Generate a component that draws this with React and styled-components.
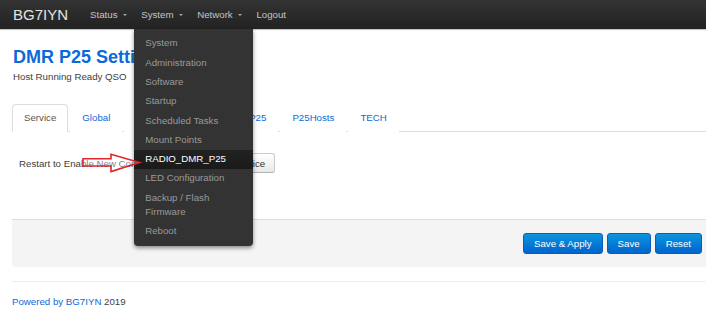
import styled, { createGlobalStyle } from "styled-components";

const GlobalStyle = createGlobalStyle`
  html, body {
    margin: 0;
    padding: 0;
    background: #fff;
    overflow: hidden;
  }
  body {
    font-family: "Liberation Sans", Arial, sans-serif;
    font-size: 9.7px;
    color: #404040;
  }
`;

const systemMenu = [
  "System",
  "Administration",
  "Software",
  "Startup",
  "Scheduled Tasks",
  "Mount Points",
  "RADIO_DMR_P25",
  "LED Configuration",
  "Backup / Flash Firmware",
  "Reboot",
];

const tabs = ["Service", "Global", "DMR", "DMRGW", "P25", "P25Hosts", "TECH"];

const App = () => {
  return (
    <>
      <GlobalStyle />
      <NavBar>
        <Brand>BG7IYN</Brand>
        <NavItem>
          Status <Caret />
        </NavItem>
        <NavItem>
          System <Caret />
          <DropMenu>
            {systemMenu.map((item) => (
              <MenuItem key={item} $active={item === "RADIO_DMR_P25"}>
                {item}
              </MenuItem>
            ))}
          </DropMenu>
        </NavItem>
        <NavItem>
          Network <Caret />
        </NavItem>
        <NavItem>Logout</NavItem>
      </NavBar>

      <Main>
        <Title>DMR P25 Settings</Title>
        <SubTitle>Host Running Ready QSO</SubTitle>

        <TabList>
          {tabs.map((t, i) => (
            <Tab key={t} $active={i === 0}>
              {t}
            </Tab>
          ))}
        </TabList>

        <FieldRow>
          <FieldLabel>Restart to Enable New Config</FieldLabel>
          <PlainButton>Restart Service</PlainButton>
          <Arrow width="60" height="20" viewBox="0 0 60 20">
            <path
              d="M1 5.8 L29 5.8 L29 1.3 L57.5 9.5 L29 18.6 L29 13 L1 13 Z"
              fill="rgba(255,255,255,0.35)"
              stroke="#e3252b"
              strokeWidth="1.6"
              strokeLinejoin="miter"
            />
          </Arrow>
        </FieldRow>

        <ActionPanel>
          <PrimaryButton>Save &amp; Apply</PrimaryButton>
          <PrimaryButton>Save</PrimaryButton>
          <PrimaryButton>Reset</PrimaryButton>
        </ActionPanel>

        <Footer>
          <FooterLink>Powered by BG7IYN</FooterLink> 2019
        </Footer>
      </Main>
    </>
  );
};
export default App;

const NavBar = styled.div`
  height: 29px;
  background: linear-gradient(to bottom, #333333, #222222);
  box-shadow: 0 1px 1px rgba(0, 0, 0, 0.22);
  display: flex;
  flex-direction: row;
  align-items: center;
  padding-left: 13px;
  position: relative;
  z-index: 2;
`;
const Brand = styled.span`
  font-size: 15px;
  color: #e4e4e4;
  margin-right: 15px;
`;
const NavItem = styled.div`
  position: relative;
  height: 29px;
  display: flex;
  align-items: center;
  padding: 0 7px;
  color: #c4c4c4;
  white-space: pre;
`;
const Caret = styled.span`
  width: 0;
  height: 0;
  border-left: 2.4px solid transparent;
  border-right: 2.4px solid transparent;
  border-top: 2.6px solid #a8a8a8;
  margin-left: 3px;
  margin-top: 1px;
`;
const DropMenu = styled.div`
  position: absolute;
  top: 100%;
  left: 0;
  width: 119px;
  padding: 5px 0;
  background: #333333;
  border-radius: 0 0 4px 4px;
  box-shadow: 0 2px 4px rgba(0, 0, 0, 0.45);
  white-space: normal;
`;
const MenuItem = styled.div`
  padding: 2.4px 11px;
  line-height: 14.5px;
  color: ${(p) => (p.$active ? "#ffffff" : "#9a9a9a")};
  background: ${(p) =>
    p.$active ? "linear-gradient(to bottom, #222222, #1a1a1a)" : "transparent"};
`;
const Main = styled.div`
  padding-left: 12px;
`;
const Title = styled.h2`
  margin: 18px 0 0 1px;
  font-size: 18px;
  line-height: 20px;
  font-weight: bold;
  color: #0a6ad8;
`;
const SubTitle = styled.div`
  margin: 3px 0 0 1px;
  line-height: 14px;
`;
const TabList = styled.div`
  display: flex;
  flex-direction: row;
  margin-top: 20px;
  border-bottom: 1px solid #dddddd;
`;
const Tab = styled.div`
  height: 26px;
  line-height: 26px;
  padding: 0 11px;
  margin-right: 2px;
  margin-bottom: -1px;
  border: 1px solid ${(p) => (p.$active ? "#dddddd" : "transparent")};
  border-bottom-color: ${(p) => (p.$active ? "#ffffff" : "transparent")};
  border-radius: 4px 4px 0 0;
  background: #fff;
  color: ${(p) => (p.$active ? "#555555" : "#0a6ad8")};
`;
const FieldRow = styled.div`
  position: relative;
  display: flex;
  align-items: center;
  margin-top: 21px;
  padding-left: 7px;
  height: 20px;
`;
const FieldLabel = styled.span`
  width: 170px;
`;
const PlainButton = styled.button`
  height: 20px;
  padding: 0 9px;
  font-family: inherit;
  font-size: 9.7px;
  color: #333;
  border: 1px solid #cccccc;
  border-bottom-color: #b3b3b3;
  border-radius: 3px;
  background: linear-gradient(to bottom, #ffffff, #e8e8e8);
`;
const Arrow = styled.svg`
  position: absolute;
  left: 70px;
  top: 0;
  z-index: 3;
  overflow: visible;
`;
const ActionPanel = styled.div`
  margin-top: 46px;
  height: 21px;
  padding: 13px 4px 13px 0;
  background: #f4f4f4;
  border-top: 1px solid #dddddd;
  border-radius: 0 0 0 4px;
  display: flex;
  justify-content: flex-end;
  gap: 4px;
`;
const PrimaryButton = styled.button`
  height: 21px;
  padding: 0 10px;
  font-family: inherit;
  font-size: 9.7px;
  color: #fff;
  border: 1px solid #0a5cb8;
  border-radius: 3px;
  background: linear-gradient(to bottom, #0b95df, #0064cc);
`;
const Footer = styled.div`
  margin-top: 14px;
  border-top: 1px solid #eeeeee;
  padding-top: 13px;
  line-height: 14px;
  color: #404040;
`;
const FooterLink = styled.span`
  color: #0a6ad8;
`;
